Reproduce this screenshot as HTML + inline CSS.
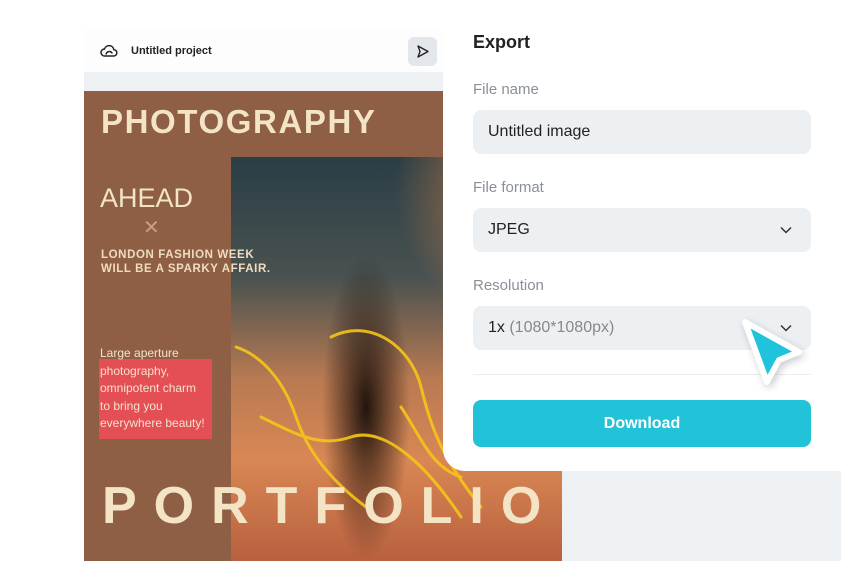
<!DOCTYPE html>
<html><head><style>
*{margin:0;padding:0;box-sizing:border-box}
body{width:841px;height:561px;overflow:hidden;background:#fff;font-family:"Liberation Sans",sans-serif;position:relative}
.abs{position:absolute}
.gray{left:84px;top:30px;width:757px;height:531px;background:#eef1f4}
.hdr{left:84px;top:30px;width:359px;height:42px;background:#fdfdfd}
.poster{left:84px;top:91px;width:478px;height:470px;background:#8e5f45;overflow:hidden}
.photo{left:147px;top:66px;width:331px;height:404px;background:
radial-gradient(ellipse 55px 190px at 135px 250px,rgba(25,15,10,.95),rgba(25,15,10,0) 80%),
radial-gradient(ellipse 220px 200px at 340px 30px,#f8904a,rgba(248,144,74,0) 80%),
linear-gradient(180deg,#2a3e46 0%,#4a5250 30%,#b97a52 55%,#d98754 75%,#b8603f 100%)}
.panel{left:443px;top:0;width:398px;height:471px;background:#fff;border-bottom-left-radius:22px}
.lbl{left:473px;color:#8a9099;font-size:15px}
.inp{left:473px;width:338px;height:44px;background:#edf0f3;border-radius:8px;font-size:16px;color:#222;padding:13px 15px}
.chev{position:absolute;right:18px;top:15px}
</style></head><body>
<div class="abs gray"></div>
<div class="abs hdr"></div>
<svg class="abs" style="left:100px;top:43px" width="18" height="16" viewBox="0 0 18 16"><path d="M4.5 13h9a3.2 3.2 0 0 0 .3-6.4A4.8 4.8 0 0 0 4.5 6 3.5 3.5 0 0 0 4.5 13zM6 11.5a3.3 3.3 0 0 1 6.3-1" fill="none" stroke="#222" stroke-width="1.5"/></svg>
<div class="abs" style="left:131px;top:45px;font-size:11px;font-weight:bold;color:#222">Untitled project</div>
<div class="abs" style="left:408px;top:37px;width:29px;height:29px;background:#e3e7eb;border-radius:6px"></div>
<svg class="abs" style="left:415px;top:44px" width="15" height="15" viewBox="0 0 15 15"><path d="M3 2l10 5.5-10 5.5 2-5.5z" fill="none" stroke="#222" stroke-width="1.4" stroke-linejoin="round"/></svg>
<div class="abs poster">
<div class="abs photo"></div>
<svg class="abs" style="left:147px;top:66px" width="331" height="404" viewBox="0 0 331 404"><g fill="none" stroke="#f5c518" stroke-width="3" stroke-linecap="round" opacity=".9"><path d="M5 190c30 10 50 40 60 70s30 60 70 90"/><path d="M100 180c40-20 80 10 90 50s20 70 60 120"/><path d="M30 260c40 20 60 30 90 20s70 20 110 80"/><path d="M170 250c20 30 30 60 60 70"/></g></svg>
<div class="abs" style="left:17px;top:12px;font-size:33px;font-weight:bold;color:#f3e4c6;letter-spacing:1.6px">PHOTOGRAPHY</div>
<div class="abs" style="left:16px;top:92px;font-size:27px;color:#f3e4c6">AHEAD</div>
<div class="abs" style="left:59px;top:124px;font-size:20px;color:#c89d80">✕</div>
<div class="abs" style="left:17px;top:157px;font-size:11.5px;font-weight:bold;color:#eedcc0;line-height:14px;letter-spacing:0.6px">LONDON FASHION WEEK<br>WILL BE A SPARKY AFFAIR.</div>
<div class="abs" style="left:15px;top:268px;width:113px;height:80px;background:#e44f55"></div>
<div class="abs" style="left:16px;top:254px;font-size:12px;color:#f4e2cc;line-height:17.5px">Large aperture<br>photography,<br>omnipotent charm<br>to bring you<br>everywhere beauty!</div>
<div class="abs" style="left:18px;top:385px;font-size:52px;font-weight:bold;color:#f3e4c6;letter-spacing:17px">PORTFOLIO</div>
</div>
<div class="abs panel"></div>
<div class="abs" style="left:473px;top:32px;font-size:18px;font-weight:bold;color:#222">Export</div>
<div class="abs lbl" style="top:81px">File name</div>
<div class="abs inp" style="top:110px">Untitled image</div>
<div class="abs lbl" style="top:179px">File format</div>
<div class="abs inp" style="top:208px">JPEG<svg class="chev" width="14" height="14" viewBox="0 0 14 14"><path d="M2 4.5l5 5 5-5" fill="none" stroke="#333" stroke-width="1.5"/></svg></div>
<div class="abs lbl" style="top:277px">Resolution</div>
<div class="abs inp" style="top:306px">1x <span style="color:#888">(1080*1080px)</span><svg class="chev" width="14" height="14" viewBox="0 0 14 14"><path d="M2 4.5l5 5 5-5" fill="none" stroke="#333" stroke-width="1.5"/></svg></div>
<div class="abs" style="left:473px;top:374px;width:338px;height:1px;background:#eceef0"></div>
<div class="abs" style="left:473px;top:400px;width:338px;height:47px;background:#22c3d8;border-radius:8px;color:#fff;font-weight:bold;font-size:16px;text-align:center;line-height:47px">Download</div>
<svg class="abs" style="left:735px;top:312px" width="75" height="80" viewBox="0 0 75 80"><path d="M10 10L64 40 44 48 32 70z" fill="#1fc3dc" stroke="#fff" stroke-width="6" stroke-linejoin="round" style="filter:drop-shadow(2px 3px 4px rgba(0,0,0,.2))"/></svg>
</body></html>
